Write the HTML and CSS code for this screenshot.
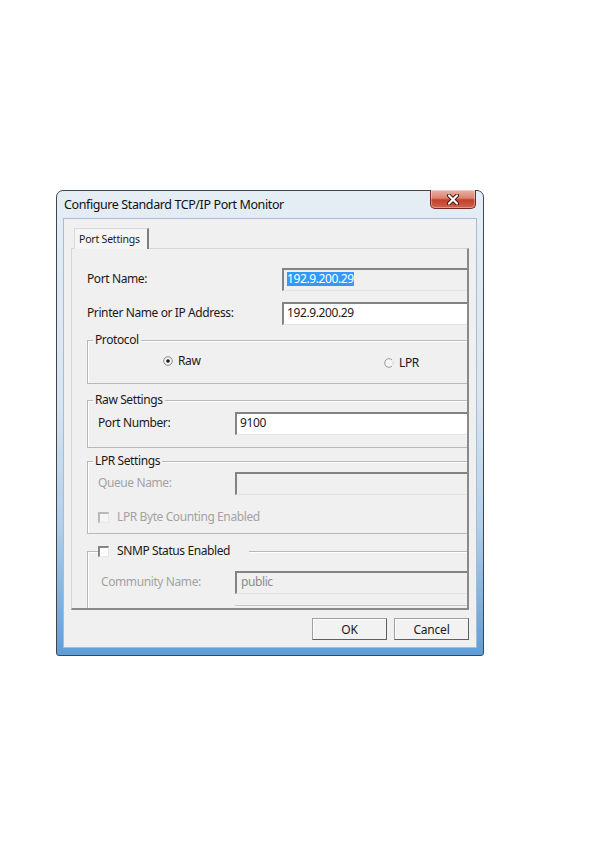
FILE: index.html
```html
<!DOCTYPE html>
<html lang="en">
<head>
    <meta charset="UTF-8">
    <title>Configure Standard TCP/IP Port Monitor</title>
    <link rel="stylesheet" href="styles.css">
</head>
<body>
<div class="window">
    <div class="titlebar">
        <span class="title">Configure Standard TCP/IP Port Monitor</span>
        <span class="close">
            <svg width="14" height="11" viewBox="0 0 14 11">
                <path d="M3 1.5 L11 9.5 M11 1.5 L3 9.5" stroke="#4a1208" stroke-width="4" stroke-linecap="round"/>
                <path d="M3 1.5 L11 9.5 M11 1.5 L3 9.5" stroke="#ffffff" stroke-width="2.2" stroke-linecap="round"/>
            </svg>
        </span>
    </div>
    <div class="client">
        <div class="tabs"><span class="tab">Port Settings</span></div>
        <div class="panel">
            <div class="sheet">
                <div class="row first">
                    <span class="label">Port Name:</span>
                    <span class="field readonly"><span class="sel">192.9.200.29</span></span>
                </div>
                <div class="row">
                    <span class="label">Printer Name or IP Address:</span>
                    <span class="field">192.9.200.29</span>
                </div>

                <div class="group protocol">
                    <span class="caption">Protocol</span>
                    <div class="radios">
                        <span class="option">
                            <svg width="10" height="10" viewBox="0 0 10 10">
                                <circle cx="5" cy="5" r="4.3" fill="#f4f4f4" stroke="#8a8a8a" stroke-width="1"/>
                                <circle cx="5" cy="5" r="1.8" fill="#1c1c1c"/>
                            </svg>
                            Raw
                        </span>
                        <span class="option second">
                            <svg width="10" height="10" viewBox="0 0 10 10">
                                <circle cx="5" cy="5" r="4.3" fill="#f6f6f6" stroke="#9a9a9a" stroke-width="1"/>
                                <path d="M8 2 A4.3 4.3 0 0 1 8 8" stroke="#f0f0f0" stroke-width="1.4" fill="none"/>
                            </svg>
                            LPR
                        </span>
                    </div>
                </div>

                <div class="group raw">
                    <span class="caption">Raw Settings</span>
                    <div class="grow">
                        <span class="label">Port Number:</span>
                        <span class="field">9100</span>
                    </div>
                </div>

                <div class="group lprset">
                    <span class="caption">LPR Settings</span>
                    <div class="grow off">
                        <span class="label">Queue Name:</span>
                        <span class="field readonly"></span>
                    </div>
                    <div class="check off"><span class="box"></span>LPR Byte Counting Enabled</div>
                </div>

                <div class="group snmp">
                    <span class="caption check"><span class="box"></span>SNMP Status Enabled</span>
                    <div class="grow off community">
                        <span class="label">Community Name:</span>
                        <span class="field readonly">public</span>
                    </div>
                    <div class="grow stub">
                        <span class="label"></span>
                        <span class="field readonly"></span>
                    </div>
                </div>
            </div>
        </div>
        <div class="buttons">
            <button class="btn">OK</button>
            <button class="btn">Cancel</button>
        </div>
    </div>
</div>
</body>
</html>
```

FILE: styles.css
```css
body{
    margin: 0;
    background: #fff;
    font-family: "Noto Sans", "Liberation Sans", sans-serif;
    font-size: 12px;
    letter-spacing: -0.4px;
    color: #1a1a1a;
}
.window{
    width: 428px;
    height: 466px;
    margin: 190px 0 0 56px;
    box-sizing: border-box;
    border: 1px solid #3f4650;
    border-radius: 7px 7px 3px 3px;
    padding: 0 6px 7px;
    display: flex;
    flex-direction: column;
    background: linear-gradient(180deg, #e5edf5 0%, #d9e5f1 45%, #b2cfe9 72%, #5f9dd7 100%);
}
.titlebar{
    height: 27px;
    display: flex;
    justify-content: space-between;
    align-items: flex-start;
    padding-left: 1px;
}
.title{
    font-size: 12.5px;
    line-height: 27px;
    color: #111;
}
.close{
    width: 46px;
    height: 19px;
    margin: -1px 1px 0 0;
    box-sizing: border-box;
    border: 1px solid #6e2a1f;
    border-top: none;
    border-radius: 0 0 5px 5px;
    display: flex;
    justify-content: center;
    align-items: center;
    background: linear-gradient(180deg, #ebb3a6 0%, #d98371 45%, #c2402b 55%, #d0644e 100%);
    box-shadow: inset 0 0 0 1px rgba(255,255,255,0.35);
}
.client{
    flex: 1;
    display: flex;
    flex-direction: column;
    background: #f0f0f0;
    border: 1px solid #a7bbd1;
    padding: 9px 7px 7px;
}
.tabs{
    display: flex;
    padding-left: 3px;
    margin-bottom: -1px;
}
.tab{
    position: relative;
    z-index: 1;
    height: 21px;
    box-sizing: border-box;
    padding: 0 7px 0 4px;
    font-size: 10.5px;
    letter-spacing: -0.2px;
    line-height: 20px;
    background: #f5f5f5;
    border: 1px solid #d9d9d9;
    border-right: 2px solid #7d7d7d;
    border-bottom: none;
}
.panel{
    height: 362px;
    box-sizing: border-box;
    border: 1px solid #d6d6d6;
    border-right: 2px solid #8a8a8a;
    border-bottom: 2px solid #8a8a8a;
    overflow: hidden;
}
.sheet{
    width: 440px;
}
.row{
    display: flex;
    margin-top: 11px;
    padding-left: 15px;
}
.row.first{
    margin-top: 19px;
}
.label{
    flex: none;
    padding-top: 2px;
    line-height: 17px;
    white-space: nowrap;
}
.row .label{
    width: 195px;
}
.field{
    flex: 1;
    height: 23px;
    box-sizing: border-box;
    padding: 0 3px;
    line-height: 17px;
    background: #fff;
    border-top: 2px solid #838383;
    border-left: 2px solid #838383;
    border-bottom: 1px solid #e4e4e4;
    white-space: nowrap;
}
.field.readonly{
    background: #f0f0f0;
}
.sel{
    display: inline-block;
    line-height: 14px;
    background: #3399ff;
    color: #fff;
}
.group{
    margin: 15px 0 0 15px;
    box-sizing: border-box;
    border: 1px solid #b8b8b8;
    box-shadow: inset 1px 1px 0 #fff;
}
.caption{
    display: flex;
    align-items: center;
    width: fit-content;
    margin: -9px 0 0 5px;
    padding: 0 2px;
    line-height: 16px;
    background: #f0f0f0;
}
.protocol{
    height: 44px;
}
.radios{
    display: grid;
    grid-template-columns: 221px auto;
    align-items: start;
    margin-top: 5px;
    padding-left: 75px;
    line-height: 16px;
}
.option{
    display: flex;
    align-items: center;
    gap: 5px;
}
.option.second{
    margin-top: 2px;
}
.raw{
    height: 48px;
    margin-top: 16px;
}
.grow{
    display: flex;
    margin-top: 4px;
    padding-left: 10px;
}
.grow .label{
    width: 137px;
}
.lprset{
    height: 73px;
    margin-top: 13px;
}
.lprset .grow{
    margin-top: 3px;
}
.off{
    color: #a3a3a3;
}
.check{
    display: flex;
    align-items: center;
    gap: 8px;
    line-height: 16px;
}
.lprset .check{
    margin-top: 14px;
    padding-left: 10px;
}
.box{
    width: 11px;
    height: 11px;
    box-sizing: border-box;
    background: #fff;
    border-top: 2px solid #858585;
    border-left: 2px solid #858585;
    border-right: 1px solid #e6e6e6;
    border-bottom: 1px solid #e6e6e6;
}
.off .box{
    background: #f5f5f5;
    border-top-color: #b9b9b9;
    border-left-color: #b9b9b9;
}
.snmp{
    height: 90px;
    margin-top: 17px;
}
.snmp .caption{
    margin-left: 10px;
    padding: 0 19px 0 0;
}
.community{
    margin-top: 12px;
    padding-left: 13px;
}
.community .label{
    width: 134px;
}
.community .field{
    padding-left: 4px;
    color: #8c8c8c;
}
.stub{
    margin-top: 11px;
}
.stub .field{
    border-top: 1px solid #c9c9c9;
    border-left: none;
}
.buttons{
    display: flex;
    justify-content: flex-end;
    gap: 7px;
    margin-top: 8px;
}
.btn{
    width: 75px;
    height: 22px;
    padding: 0;
    font-family: inherit;
    font-size: 12px;
    letter-spacing: -0.2px;
    color: #1a1a1a;
    background: #f2f2f2;
    border: 1px solid #a0a0a0;
    border-right-color: #5f5f5f;
    border-bottom-color: #5f5f5f;
    box-shadow: inset 1px 1px 0 #fff;
}
```
